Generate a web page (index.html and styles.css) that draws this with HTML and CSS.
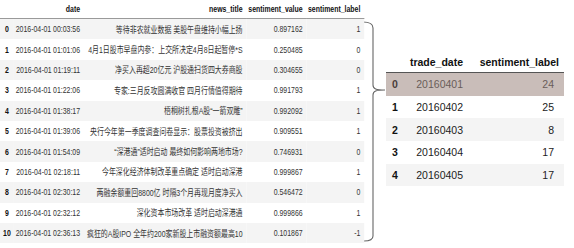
FILE: index.html
```html
<!DOCTYPE html>
<html>
<head>
<meta charset="utf-8">
<link rel="stylesheet" href="styles.css">
</head>
<body>
<div class="page">
  <div class="left-wrap">
    <table class="df df-left">
      <colgroup>
        <col class="c-idx"><col class="c-date"><col class="c-title"><col class="c-val"><col class="c-lab">
      </colgroup>
      <thead>
        <tr><th></th><th>date</th><th>news_title</th><th>sentiment_value</th><th>sentiment_label</th></tr>
      </thead>
      <tbody>
        <tr><th>0</th><td>2016-04-01 00:03:56</td><td>等待非农就业数据 美股午盘维持小幅上扬</td><td>0.897162</td><td>1</td></tr>
        <tr><th>1</th><td>2016-04-01 01:01:06</td><td>4月1日股市早盘内参：上交所决定4月8日起暂停*S</td><td>0.250485</td><td>0</td></tr>
        <tr><th>2</th><td>2016-04-01 01:19:11</td><td>净买入再超20亿元 沪股通扫货四大券商股</td><td>0.304655</td><td>0</td></tr>
        <tr><th>3</th><td>2016-04-01 01:22:06</td><td>专家:三月反攻圆满收官 四月行情值得期待</td><td>0.991793</td><td>1</td></tr>
        <tr><th>4</th><td>2016-04-01 01:38:17</td><td>梧桐树扎根A股“一箭双雕”</td><td>0.992092</td><td>1</td></tr>
        <tr><th>5</th><td>2016-04-01 01:39:06</td><td>央行今年第一季度调查问卷显示：股票投资被挤出</td><td>0.909551</td><td>1</td></tr>
        <tr><th>6</th><td>2016-04-01 01:54:09</td><td>“深港通”适时启动 最终如何影响两地市场?</td><td>0.746931</td><td>0</td></tr>
        <tr><th>7</th><td>2016-04-01 02:18:11</td><td>今年深化经济体制改革重点确定 适时启动深港</td><td>0.999867</td><td>1</td></tr>
        <tr><th>8</th><td>2016-04-01 02:30:12</td><td>两融余额重回8800亿 时隔3个月再现月度净买入</td><td>0.546472</td><td>0</td></tr>
        <tr><th>9</th><td>2016-04-01 02:32:12</td><td>深化资本市场改革 适时启动深港通</td><td>0.999866</td><td>1</td></tr>
        <tr><th>10</th><td>2016-04-01 02:36:13</td><td>疯狂的A股IPO 全年约200家新股上市融资额最高10</td><td>0.101867</td><td>-1</td></tr>
      </tbody>
    </table>
  </div>
  <svg class="brace" width="26" height="248" viewBox="0 0 26 248">
    <path d="M3,22 C9,22 13,23 13,28 L13,85 C13,89 16,90 25,90 C16,90 13,91 13,95 L13,236 C13,240 9,241 4,241" fill="none" stroke="#666" stroke-width="1.1"/>
  </svg>
  <table class="df df-right">
    <colgroup>
      <col class="r-idx"><col class="r-date"><col class="r-lab">
    </colgroup>
    <thead>
      <tr><th></th><th>trade_date</th><th>sentiment_label</th></tr>
    </thead>
    <tbody>
      <tr class="hl"><th>0</th><td>20160401</td><td>24</td></tr>
      <tr><th>1</th><td>20160402</td><td>25</td></tr>
      <tr><th>2</th><td>20160403</td><td>8</td></tr>
      <tr><th>3</th><td>20160404</td><td>17</td></tr>
      <tr><th>4</th><td>20160405</td><td>17</td></tr>
    </tbody>
  </table>
</div>
</body>
</html>
```

FILE: styles.css
```css
html, body {
  margin: 0;
  padding: 0;
  background: #ffffff;
}

.page {
  display: flex;
  align-items: flex-start;
  width: 574px;
  height: 248px;
  overflow: hidden;
  font-family: "Liberation Sans", Arial, "Noto Sans CJK SC", sans-serif;
}

.left-wrap {
  width: 360px;
  flex: 0 0 360px;
  height: 248px;
}

.df {
  border-collapse: collapse;
  border-spacing: 0;
  table-layout: fixed;
}

.df th, .df td {
  padding: 0 5px 0 0;
  text-align: right;
  white-space: nowrap;
  vertical-align: middle;
}

/* Left (squeezed) table */
.df-left {
  width: 473px;
  font-size: 9px;
  color: #333;
  transform: scaleX(0.77);
  transform-origin: 0 0;
}

.df-left .c-idx { width: 18px; }
.df-left .c-date { width: 91px; }
.df-left .c-title { width: 211px; }
.df-left .c-val { width: 78px; }
.df-left .c-lab { width: 75px; }

.df-left thead th {
  height: 18px;
  font-weight: bold;
  color: #111;
  border-bottom: 1px solid #9a9a9a;
}

.df-left tbody th, .df-left tbody td {
  height: 20.4px;
}

.df-left tbody th {
  text-align: center;
  padding: 0;
  font-weight: bold;
  color: #111;
}

.df-left tbody td:nth-child(3) {
  font-family: "Liberation Sans", "Noto Sans CJK SC", sans-serif;
}

.df tbody tr:nth-child(odd) {
  background: #f4f4f4;
}

/* Brace */
.brace {
  flex: 0 0 26px;
  display: block;
}

/* Right table */
.df-right {
  margin-top: 51px;
  width: 178px;
  font-size: 10.5px;
  color: #222;
}

.df-right .r-idx { width: 18px; }
.df-right .r-date { width: 64px; }
.df-right .r-lab { width: 96px; }

.df-right thead th {
  height: 21px;
  font-weight: bold;
  color: #111;
  border-bottom: 1.5px solid #555;
}

.df-right tbody th, .df-right tbody td {
  height: 22.7px;
}

.df-right tbody th {
  text-align: center;
  padding: 0;
  font-weight: bold;
  color: #111;
}

.df-right td:last-child {
  padding-right: 10px;
}

.df-right tbody tr.hl {
  background: #c9bdb9;
  color: #6a5e5a;
}

.df-right tbody tr.hl th {
  color: #4a403d;
}
```
